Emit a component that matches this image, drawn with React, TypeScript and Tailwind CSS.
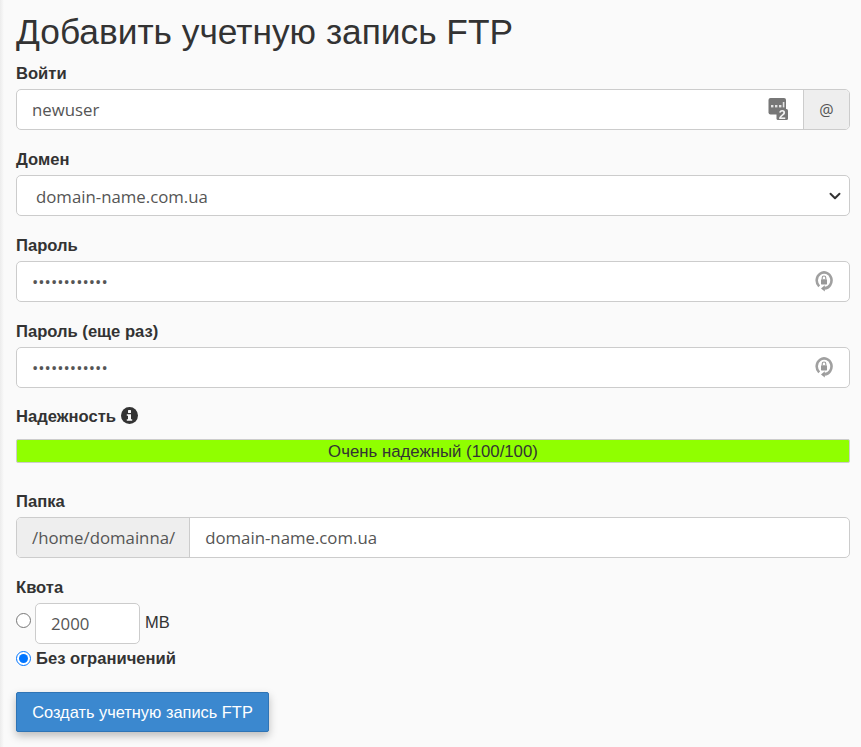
import { ChevronDown } from 'lucide-react'

const sans = "font-['Liberation_Sans',Arial,sans-serif]"
const inputText = "font-['Open_Sans',sans-serif] text-[16.8px] text-[#555]"

function Label({ children }: { children: React.ReactNode }) {
    return <label className="block h-[20px] leading-[22px] mb-[6px] text-[16.6px] font-bold text-[#333]">{children}</label>
}

// badge icon next to the login field
function UserLimitIcon() {
    return (
        <svg width="20" height="23" viewBox="0 0 20 23" className="shrink-0 blur-[0.3px]">
            <rect x="0.5" y="0" width="17.5" height="16.5" rx="2" fill="#777" />
            <rect x="3" y="7" width="2.4" height="2.4" fill="#e4e4e4" />
            <rect x="7" y="7" width="2.4" height="2.4" fill="#e4e4e4" />
            <rect x="11" y="7" width="2.4" height="2.4" fill="#e4e4e4" />
            <rect x="14.8" y="4" width="1.6" height="5.4" fill="#e4e4e4" />
            <rect x="8.5" y="11" width="11.5" height="11" rx="1.5" fill="#777" />
            <text x="14.2" y="21" textAnchor="middle" fontSize="12.5" fontWeight="700" fontFamily="Liberation Sans" fill="#f2f2f2">2</text>
        </svg>
    )
}

function LockRefreshIcon() {
    return (
        <svg width="18" height="21" viewBox="0 0 18 21" className="shrink-0 blur-[0.4px]">
            <path d="M4.2 15.4A7.4 8 0 1 1 9.4 17.4" fill="none" stroke="#a0a0a0" strokeWidth="2.6" />
            <path d="M9.8 14.2v6.4l-3.8-3.2z" fill="#999" />
            <rect x="6" y="8.2" width="6" height="5.2" rx="0.6" fill="#999" />
            <path d="M7.2 8.2V6.8a1.8 1.8 0 0 1 3.6 0v1.4" fill="none" stroke="#999" strokeWidth="1.1" />
        </svg>
    )
}

function PasswordField({ label }: { label: string }) {
    return (
        <div className="mb-[19px]">
            <Label>{label}</Label>
            <div className="flex items-center h-[41px] bg-white border border-[#ccc] rounded-[5px] pr-[16px]">
                <input type="password" readOnly value="aaaaaaaaaaaa" className={`flex-1 min-w-0 h-full pl-[15px] outline-none bg-transparent ${inputText}`} />
                <LockRefreshIcon />
            </div>
        </div>
    )
}

export default function App() {
    return (
        <div className={`min-h-[747px] bg-[linear-gradient(to_right,#ececec,#fafafa_4px)] px-[16px] pr-[11px] overflow-hidden ${sans}`}>
            <h1 className="pt-[11px] h-[63px] text-[35.3px] leading-[42px] text-[#333] whitespace-nowrap">Добавить учетную запись FTP</h1>

            {/* Login */}
            <div className="mb-[19px]">
                <Label>Войти</Label>
                <div className="flex h-[41px] bg-white border border-[#ccc] rounded-[5px] overflow-hidden">
                    <input readOnly value="newuser" className={`flex-1 min-w-0 pl-[15px] outline-none bg-transparent ${inputText}`} />
                    <div className="flex items-center pr-[15px]">
                        <UserLimitIcon />
                    </div>
                    <div className="flex items-center justify-center w-[46px] bg-[#eee] border-l border-[#ccc] text-[16px] text-[#555] font-['Open_Sans',sans-serif]">@</div>
                </div>
            </div>

            {/* Domain */}
            <div className="mb-[19px]">
                <Label>Домен</Label>
                <div className="relative">
                    <select className={`block w-full h-[41px] appearance-none bg-white border border-[#ccc] rounded-[5px] pl-[19px] pt-[2px] outline-none ${inputText}`}>
                        <option>domain-name.com.ua</option>
                    </select>
                    <ChevronDown size={18} strokeWidth={2.6} className="absolute right-[6px] top-[11.5px] text-[#333]" />
                </div>
            </div>

            <PasswordField label="Пароль" />
            <PasswordField label="Пароль (еще раз)" />

            {/* Strength */}
            <div className="-mt-[1px] mb-[28px]">
                <div className="flex items-center gap-[5px] h-[20px] mb-[13px]">
                    <span className="pt-[2px] text-[16.6px] leading-[22px] font-bold text-[#333]">Надежность</span>
                    <svg width="17" height="17" viewBox="0 0 17 17" className="-mt-[2px]">
                        <circle cx="8.5" cy="8.5" r="8.5" fill="#333" />
                        <rect x="7" y="3" width="3" height="3" rx="0.5" fill="#fafafa" />
                        <path d="M5.8 7.2h4.2v5h1.2v1.6H5.8v-1.6H7V8.8H5.8z" fill="#fafafa" />
                    </svg>
                </div>
                <div className="h-[24px] border border-[#ccc] bg-[#90ff00] rounded-[2px] text-center text-[16.8px] leading-[24px] text-[#333]">
                    Очень надежный (100/100)
                </div>
            </div>

            {/* Folder */}
            <div className="mb-[19px]">
                <Label>Папка</Label>
                <div className="flex h-[41px] bg-white border border-[#ccc] rounded-[5px] overflow-hidden">
                    <div className={`flex items-center pl-[15px] pr-[14px] bg-[#eee] border-r border-[#ccc] ${inputText}`}>/home/domainna/</div>
                    <input readOnly value="domain-name.com.ua" className={`flex-1 min-w-0 pl-[15px] outline-none bg-transparent ${inputText}`} />
                </div>
            </div>

            {/* Quota */}
            <div>
                <Label>Квота</Label>
                <div className="flex items-start h-[41px]">
                    <input type="radio" name="quota" readOnly className="w-[15px] h-[15px] mt-[10px] mr-[4px]" />
                    <input readOnly value="2000" className={`w-[105px] h-[41px] bg-white border border-[#ccc] rounded-[5px] pl-[15px] outline-none ${inputText}`} />
                    <span className="ml-[5px] mt-[9px] text-[16.5px] leading-[20px] text-[#333]">MB</span>
                </div>
                <div className="flex items-center h-[20px] mt-[4px]">
                    <input type="radio" name="quota" defaultChecked className="w-[15px] h-[15px] mr-[5px]" />
                    <span className="pt-[2px] text-[16.6px] leading-[22px] font-bold text-[#333]">Без ограничений</span>
                </div>
            </div>

            <button className="block mt-[24px] w-[253px] h-[40px] bg-[#3b88cf] border border-[#2f74b5] rounded-[2px] text-[16.4px] text-white shadow-[0_4px_8px_rgba(0,0,0,0.25)]">
                Создать учетную запись FTP
            </button>
        </div>
    )
}
